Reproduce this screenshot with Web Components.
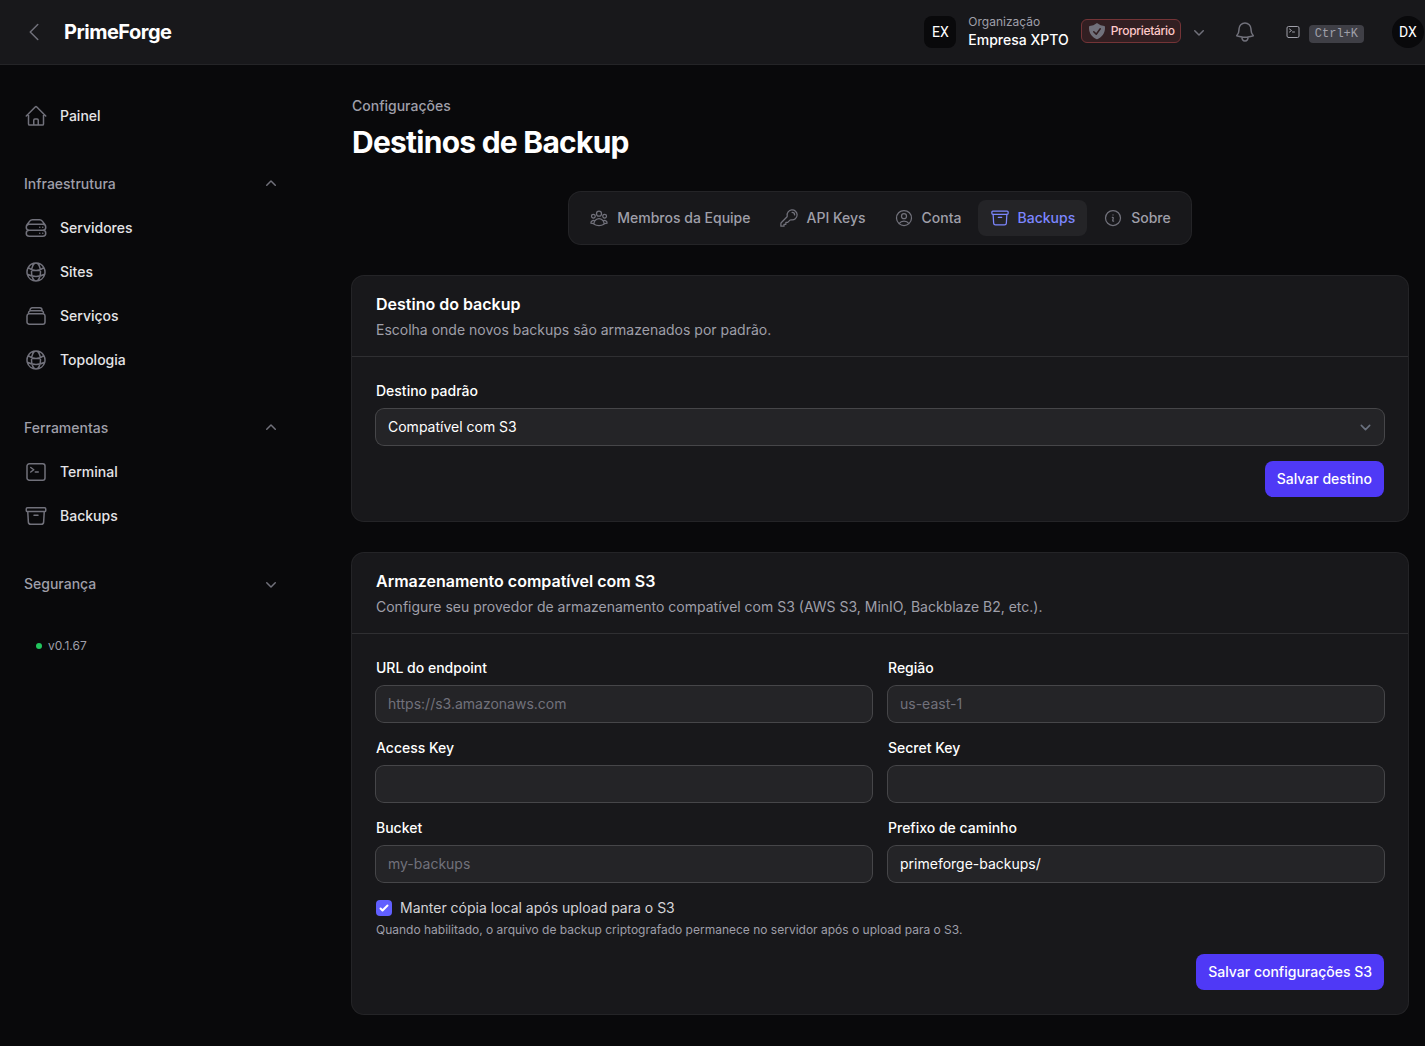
<!DOCTYPE html>
<html lang="pt-BR">
<head>
<meta charset="utf-8">
<title>Destinos de Backup - PrimeForge</title>
<style>
html{background:#09090b}
body{margin:0;background:#09090b;color:#fff;font:400 14px/20px Inter,"Liberation Sans",sans-serif;min-height:1046px;overflow:hidden}
</style>
</head>
<body>
<pf-app></pf-app>
<script>
const OUT = {
  back:'M15.75 19.5 8.25 12l7.5-7.5',
  home:'m2.25 12 8.954-8.955c.44-.439 1.152-.439 1.591 0L21.75 12M4.5 9.75v10.125c0 .621.504 1.125 1.125 1.125H9.75v-4.875c0-.621.504-1.125 1.125-1.125h2.25c.621 0 1.125.504 1.125 1.125V21h4.125c.621 0 1.125-.504 1.125-1.125V9.75M8.25 21h8.25',
  server:'M5.25 14.25h13.5m-13.5 0a3 3 0 0 1-3-3m3 3a3 3 0 1 0 0 6h13.5a3 3 0 1 0 0-6m-16.5-3a3 3 0 0 1 3-3h13.5a3 3 0 0 1 3 3m-19.5 0a4.5 4.5 0 0 1 .9-2.7L5.737 5.1a3.375 3.375 0 0 1 2.7-1.35h7.126c1.062 0 2.062.5 2.7 1.35l2.587 3.45a4.5 4.5 0 0 1 .9 2.7m0 0a3 3 0 0 1-3 3m0 3h.008v.008h-.008v-.008Zm0-6h.008v.008h-.008v-.008Zm-3 6h.008v.008h-.008v-.008Zm0-6h.008v.008h-.008v-.008Z',
  globe:'M12 21a9.004 9.004 0 0 0 8.716-6.747M12 21a9.004 9.004 0 0 1-8.716-6.747M12 21c2.485 0 4.5-4.03 4.5-9S14.485 3 12 3m0 18c-2.485 0-4.5-4.03-4.5-9S9.515 3 12 3m0 0a8.997 8.997 0 0 1 7.843 4.582M12 3a8.997 8.997 0 0 0-7.843 4.582m15.686 0A11.953 11.953 0 0 1 12 10.5c-2.998 0-5.74-1.1-7.843-2.918m15.686 0A8.959 8.959 0 0 1 21 12c0 .778-.099 1.533-.284 2.253m0 0A17.919 17.919 0 0 1 12 16.5c-3.162 0-6.133-.815-8.716-2.247m0 0A9.015 9.015 0 0 1 3 12c0-1.605.42-3.113 1.157-4.418',
  stack:'M6 6.878V6a2.25 2.25 0 0 1 2.25-2.25h7.5A2.25 2.25 0 0 1 18 6v.878m-12 0c.235-.083.487-.128.75-.128h10.5c.263 0 .515.045.75.128m-12 0A2.25 2.25 0 0 0 4.5 9v.878m13.5-3A2.25 2.25 0 0 1 19.5 9v.878m0 0a2.246 2.246 0 0 0-.75-.128H5.25c-.263 0-.515.045-.75.128m15 0A2.25 2.25 0 0 1 21 12v6a2.25 2.25 0 0 1-2.25 2.25H5.25A2.25 2.25 0 0 1 3 18v-6c0-.98.626-1.813 1.5-2.122',
  terminal:'m6.75 7.5 3 2.25-3 2.25m4.5 0h3m-9 8.25h13.5A2.25 2.25 0 0 0 21 18V6a2.25 2.25 0 0 0-2.25-2.25H5.25A2.25 2.25 0 0 0 3 6v12a2.25 2.25 0 0 0 2.25 2.25Z',
  archive:'m20.25 7.5-.625 10.632a2.25 2.25 0 0 1-2.247 2.118H6.622a2.25 2.25 0 0 1-2.247-2.118L3.75 7.5M10 11.25h4M3.375 7.5h17.25c.621 0 1.125-.504 1.125-1.125v-1.5c0-.621-.504-1.125-1.125-1.125H3.375c-.621 0-1.125.504-1.125 1.125v1.5c0 .621.504 1.125 1.125 1.125Z',
  bell:'M14.857 17.082a23.848 23.848 0 0 0 5.454-1.31A8.967 8.967 0 0 1 18 9.75V9A6 6 0 0 0 6 9v.75a8.967 8.967 0 0 1-2.312 6.022c1.733.64 3.56 1.085 5.455 1.31m5.714 0a24.255 24.255 0 0 1-5.714 0m5.714 0a3 3 0 1 1-5.714 0',
  group:'M18 18.72a9.094 9.094 0 0 0 3.741-.479 3 3 0 0 0-4.682-2.72m.94 3.198.001.031c0 .225-.012.447-.037.666A11.944 11.944 0 0 1 12 21c-2.17 0-4.207-.576-5.963-1.584A6.062 6.062 0 0 1 6 18.719m12 0a5.971 5.971 0 0 0-.941-3.197m0 0A5.995 5.995 0 0 0 12 12.75a5.995 5.995 0 0 0-5.058 2.772m0 0a3 3 0 0 0-4.681 2.72 8.986 8.986 0 0 0 3.74.477m.94-3.197a5.971 5.971 0 0 0-.94 3.197M15 6.75a3 3 0 1 1-6 0 3 3 0 0 1 6 0Zm6 3a2.25 2.25 0 1 1-4.5 0 2.25 2.25 0 0 1 4.5 0Zm-13.5 0a2.25 2.25 0 1 1-4.5 0 2.25 2.25 0 0 1 4.5 0Z',
  key:'M15.75 5.25a3 3 0 0 1 3 3m3 0a6 6 0 0 1-7.029 5.912c-.563-.097-1.159.026-1.563.43L10.5 17.25H8.25v2.25H6v2.25H2.25v-2.818c0-.597.237-1.17.659-1.591l6.499-6.499c.404-.404.527-1 .43-1.563A6 6 0 1 1 21.75 8.25Z',
  user:'M17.982 18.725A7.488 7.488 0 0 0 12 15.75a7.488 7.488 0 0 0-5.982 2.975m11.963 0a9 9 0 1 0-11.963 0m11.963 0A8.966 8.966 0 0 1 12 21a8.966 8.966 0 0 1-5.982-2.275M15 9.75a3 3 0 1 1-6 0 3 3 0 0 1 6 0Z',
  info:'m11.25 11.25.041-.02a.75.75 0 0 1 1.063.852l-.708 2.836a.75.75 0 0 0 1.063.853l.041-.021M21 12a9 9 0 1 1-18 0 9 9 0 0 1 18 0Zm-9-3.75h.008v.008H12V8.25Z'
};
const SOLID = {
  down:'M5.22 8.22a.75.75 0 0 1 1.06 0L10 11.94l3.72-3.72a.75.75 0 1 1 1.06 1.06l-4.25 4.25a.75.75 0 0 1-1.06 0L5.22 9.28a.75.75 0 0 1 0-1.06Z',
  up:'M9.47 6.47a.75.75 0 0 1 1.06 0l4.25 4.25a.75.75 0 1 1-1.06 1.06L10 8.06l-3.72 3.72a.75.75 0 0 1-1.06-1.06l4.25-4.25Z',
  shield:'M9.661 2.237a.531.531 0 0 1 .678 0 11.947 11.947 0 0 0 7.078 2.749.5.5 0 0 1 .479.425c.069.52.104 1.05.104 1.59 0 5.162-3.26 9.563-7.834 11.256a.48.48 0 0 1-.332 0C5.26 16.564 2 12.163 2 7c0-.538.035-1.069.104-1.589a.5.5 0 0 1 .48-.425 11.947 11.947 0 0 0 7.077-2.75Zm4.196 5.954a.75.75 0 0 0-1.214-.882l-3.483 4.79-1.88-1.88a.75.75 0 1 0-1.06 1.061l2.5 2.5a.75.75 0 0 0 1.137-.089l4-5.5Z'
};
const define = (name, css, html) => customElements.define(name, class extends HTMLElement {
  connectedCallback() {
    if (this.shadowRoot) return;
    const a = n => this.getAttribute(n) || '';
    this.attachShadow({mode:'open'}).innerHTML =
      `<style>:host{box-sizing:border-box}*{box-sizing:border-box}${css}</style>` + html(a, this);
  }
});

define('pf-icon', `:host{display:block;flex:none;width:var(--s,24px);height:var(--s,24px);color:#71717b}svg{display:block;width:100%;height:100%}`, a => {
  const n = a('name');
  if (n === 'select') return '<svg viewBox="0 0 20 20" fill="none" stroke="#6b7280" stroke-linecap="round" stroke-linejoin="round" stroke-width="1.5"><path d="m6 8 4 4 4-4"/></svg>';
  if (SOLID[n]) return `<svg viewBox="0 0 20 20" fill="currentColor"><path fill-rule="evenodd" clip-rule="evenodd" d="${SOLID[n]}"/></svg>`;
  return `<svg viewBox="0 0 24 24" fill="none" stroke="currentColor" stroke-width="1.5" stroke-linecap="round" stroke-linejoin="round"><path d="${OUT[n]}"/></svg>`;
});

define('pf-nav-item', `:host{display:flex;align-items:center;gap:12px;height:40px;font-weight:500;color:#e4e4e7}`,
  a => `<pf-icon name="${a('icon')}"></pf-icon><span><slot></slot></span>`);

define('pf-nav-group', `:host{display:flex;flex-direction:column;gap:4px}header{display:flex;align-items:center;justify-content:space-between;height:40px;font-weight:500;color:#9f9fa9}pf-icon{--s:20px}`,
  a => `<header><span>${a('label')}</span><pf-icon name="${a('closed') ? 'down' : 'up'}"></pf-icon></header><slot></slot>`);

define('pf-sidebar', `:host{display:flex;flex-direction:column;flex:none;width:320px;padding:31px 39px 0 24px}nav{display:flex;flex-direction:column;gap:28px}.v{display:flex;align-items:center;gap:6px;margin:34px 0 0 12px;font-size:12px;line-height:16px;color:#9f9fa9}.v i{width:6px;height:6px;border-radius:50%;background:#22c55e}`,
  () => `<nav><pf-nav-item icon="home">Painel</pf-nav-item>
  <pf-nav-group label="Infraestrutura"><pf-nav-item icon="server">Servidores</pf-nav-item><pf-nav-item icon="globe">Sites</pf-nav-item><pf-nav-item icon="stack">Serviços</pf-nav-item><pf-nav-item icon="globe">Topologia</pf-nav-item></pf-nav-group>
  <pf-nav-group label="Ferramentas"><pf-nav-item icon="terminal">Terminal</pf-nav-item><pf-nav-item icon="archive">Backups</pf-nav-item></pf-nav-group>
  <pf-nav-group label="Segurança" closed="1"></pf-nav-group></nav>
  <div class="v"><i></i><span>v0.1.67</span></div>`);

define('pf-badge', `:host{display:flex;align-items:center;gap:4px;height:24px;margin-bottom:2px;padding:0 5px;border:1px solid #743437;border-radius:6px;background:#321f22;color:#ffc9c9;font-size:12px;line-height:16px;font-weight:500;letter-spacing:-.3px}pf-icon{--s:20px}`,
  () => `<pf-icon name="shield"></pf-icon><span><slot></slot></span>`);

define('pf-topbar', `:host{display:flex;align-items:center;height:65px;padding:0 1px 1px 22px;background:#18181b;border-bottom:1px solid #242427}
.logo{margin-left:18px;font-size:20px;line-height:28px;font-weight:700;letter-spacing:-.5px}
.right{display:flex;align-items:center;margin-left:auto}
.av{width:32px;height:32px;background:#09090b;border-radius:8px;display:flex;align-items:center;justify-content:center;font-family:Roboto,sans-serif}
.dx{border-radius:50%;margin-left:28px}
.org{display:flex;flex-direction:column;margin:0 12px;font-weight:500;line-height:20px}.org small{font-size:12px;line-height:16px;font-weight:400;color:#9f9fa9}
.down{--s:20px;margin-left:8px}.bell{margin-left:24px}.term{--s:16px;margin-left:28px;color:#9f9fa9}
kbd{margin:4px 0 0 8px;padding:0 6px;height:18px;border-radius:4px;background:#3f3f46;color:#9f9fa9;font:12px/18px "Liberation Mono",monospace}`,
  () => `<pf-icon name="back"></pf-icon><div class="logo">PrimeForge</div>
  <div class="right"><div class="av">EX</div><div class="org"><small>Organização</small><span>Empresa XPTO</span></div><pf-badge>Proprietário</pf-badge><pf-icon class="down" name="down"></pf-icon><pf-icon class="bell" name="bell"></pf-icon><pf-icon class="term" name="terminal"></pf-icon><kbd>Ctrl+K</kbd><div class="av dx">DX</div></div>`);

define('pf-tab', `:host{display:flex;align-items:center;gap:8px;height:36px;padding:0 12px;border-radius:8px;font-weight:500;color:#9f9fa9}:host([active]){background:#242427;color:#7c86ff}pf-icon{--s:20px}:host([active]) pf-icon{color:#7c86ff}`,
  a => `<pf-icon name="${a('icon')}"></pf-icon><span><slot></slot></span>`);

define('pf-tabs', `:host{display:flex;align-self:center;gap:4px;padding:8px;border-radius:12px;background:#18181b;box-shadow:0 0 0 1px #242427}`, () => `<slot></slot>`);

define('pf-card', `:host{display:block;border-radius:12px;background:#18181b;box-shadow:0 0 0 1px #242427}header{padding:16px 24px;border-bottom:1px solid #2f2f32}h2{margin:0 0 4px;font-size:16px;line-height:24px;font-weight:600}p{margin:0;color:#9f9fa9}.body{display:flex;flex-direction:column;gap:16px;padding:24px}`,
  a => `<header><h2>${a('heading')}</h2><p>${a('description')}</p></header><div class="body"><slot></slot></div>`);

define('pf-field', `:host{display:flex;flex-direction:column;gap:8px;min-width:0}label{font-weight:500}.c{display:flex;align-items:center;height:36px;padding:0 8px 0 12px;border-radius:8px;background:#242427;box-shadow:0 0 0 1px #464649}.c span{flex:1}.ph{color:#71717b}pf-icon{--s:21px}`,
  a => `<label>${a('label')}</label><div class="c"><span class="${a('placeholder') ? 'ph' : ''}">${a('placeholder') || a('value')}</span>${a('select') ? '<pf-icon name="select"></pf-icon>' : ''}</div>`);

define('pf-button', `:host{display:block;align-self:flex-end;padding:8px 12px;border-radius:8px;background:#4f39f6;font-weight:500}`, () => `<slot></slot>`);

define('pf-checkbox', `:host{display:flex;flex-direction:column;gap:4px}.r{display:flex;align-items:center;gap:8px;color:#d4d4d8}svg{width:16px;height:16px;border-radius:4px;background:#615fff}small{font-size:12px;line-height:16px;color:#9f9fa9}`,
  a => `<div class="r"><svg viewBox="0 0 16 16" fill="#fff"><path d="M12.207 4.793a1 1 0 0 1 0 1.414l-5 5a1 1 0 0 1-1.414 0l-2-2a1 1 0 0 1 1.414-1.414L6.5 9.086l4.293-4.293a1 1 0 0 1 1.414 0z"/></svg><span>${a('label')}</span></div><small>${a('help')}</small>`);

define('pf-app', `:host{display:block}.page{display:flex}main{flex:1;display:flex;flex-direction:column;gap:32px;padding:31px 17px 32px 32px;min-width:0}.crumb{font-weight:500;color:#9f9fa9}h1{margin:8px 0 0;font-size:30px;line-height:36px;font-weight:700;letter-spacing:-.75px}.grid{display:grid;grid-template-columns:1fr 1fr;gap:16px}`,
  () => `<pf-topbar></pf-topbar><div class="page"><pf-sidebar></pf-sidebar><main>
  <header><div class="crumb">Configurações</div><h1>Destinos de Backup</h1></header>
  <pf-tabs><pf-tab icon="group">Membros da Equipe</pf-tab><pf-tab icon="key">API Keys</pf-tab><pf-tab icon="user">Conta</pf-tab><pf-tab icon="archive" active>Backups</pf-tab><pf-tab icon="info">Sobre</pf-tab></pf-tabs>
  <pf-card heading="Destino do backup" description="Escolha onde novos backups são armazenados por padrão."><pf-field label="Destino padrão" value="Compatível com S3" select="1"></pf-field><pf-button>Salvar destino</pf-button></pf-card>
  <pf-card heading="Armazenamento compatível com S3" description="Configure seu provedor de armazenamento compatível com S3 (AWS S3, MinIO, Backblaze B2, etc.).">
  <div class="grid"><pf-field label="URL do endpoint" placeholder="https://s3.amazonaws.com"></pf-field><pf-field label="Região" placeholder="us-east-1"></pf-field><pf-field label="Access Key"></pf-field><pf-field label="Secret Key"></pf-field><pf-field label="Bucket" placeholder="my-backups"></pf-field><pf-field label="Prefixo de caminho" value="primeforge-backups/"></pf-field></div>
  <pf-checkbox label="Manter cópia local após upload para o S3" help="Quando habilitado, o arquivo de backup criptografado permanece no servidor após o upload para o S3."></pf-checkbox><pf-button>Salvar configurações S3</pf-button></pf-card>
  </main></div>`);
</script>
</body>
</html>
